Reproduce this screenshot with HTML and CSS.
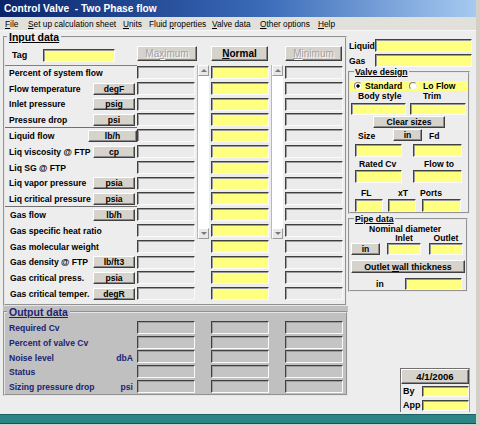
FILE: index.html
```html
<!DOCTYPE html>
<html>
<head>
<meta charset="utf-8">
<title>Control Valve - Two Phase flow</title>
<link rel="stylesheet" href="styles.css">
</head>
<body>
<div class="window">
  <div class="titlebar">Control Valve&nbsp; - Two Phase flow</div>
  <div class="menubar">
    <span class="mi m1"><u>F</u>ile</span>
    <span class="mi m2"><u>S</u>et up calculation sheet</span>
    <span class="mi m3"><u>U</u>nits</span>
    <span class="mi m4">Fluid <u>p</u>roperties</span>
    <span class="mi m5"><u>V</u>alve data</span>
    <span class="mi m6"><u>O</u>ther options</span>
    <span class="mi m7"><u>H</u>elp</span>
  </div>
  <div class="client">
    <div class="leftcol">
      <fieldset class="frame input">
        <legend>Input data</legend>
        <div class="grid">
          <div class="vscroll sb1"><div class="sbtn up"></div><div class="sbtn down"></div></div>
          <div class="vscroll sb2"><div class="sbtn up"></div><div class="sbtn down"></div></div>

          <div class="tagcell lab"><span class="taglbl">Tag</span><div class="box yel tagbox"></div></div>
          <div class="btn colbtn dis c1 wmax"><span>Ma<u>x</u>imum</span></div>
          <div class="btn colbtn strong c2"><span><u>N</u>ormal</span></div>
          <div class="btn colbtn dis c3"><span><u>M</u>inimum</span></div>

          <div class="lab first"><span>Percent of system flow</span></div>
          <div class="box gry c1"></div><div class="box yel c2"></div><div class="box gry c3"></div>

          <div class="lab"><span>Flow temperature</span><div class="btn ubtn">degF</div></div>
          <div class="box gry c1"></div><div class="box yel c2"></div><div class="box gry c3"></div>

          <div class="lab"><span>Inlet pressure</span><div class="btn ubtn">psig</div></div>
          <div class="box gry c1"></div><div class="box yel c2"></div><div class="box gry c3"></div>

          <div class="lab sep"><span>Pressure drop</span><div class="btn ubtn">psi</div></div>
          <div class="box gry c1"></div><div class="box yel c2"></div><div class="box gry c3"></div>

          <div class="lab"><span>Liquid flow</span><div class="btn ubtn wide">lb/h</div></div>
          <div class="box gry c1"></div><div class="box yel c2"></div><div class="box gry c3"></div>

          <div class="lab"><span>Liq viscosity @ FTP</span><div class="btn ubtn">cp</div></div>
          <div class="box gry c1"></div><div class="box yel c2"></div><div class="box gry c3"></div>

          <div class="lab"><span>Liq SG @ FTP</span></div>
          <div class="box gry c1"></div><div class="box yel c2"></div><div class="box gry c3"></div>

          <div class="lab"><span>Liq vapor pressure</span><div class="btn ubtn">psia</div></div>
          <div class="box gry c1"></div><div class="box yel c2"></div><div class="box gry c3"></div>

          <div class="lab sep"><span>Liq critical pressure</span><div class="btn ubtn">psia</div></div>
          <div class="box gry c1"></div><div class="box yel c2"></div><div class="box gry c3"></div>

          <div class="lab gas"><span>Gas flow</span><div class="btn ubtn">lb/h</div></div>
          <div class="box gry c1"></div><div class="box yel c2"></div><div class="box gry c3"></div>

          <div class="lab gas"><span>Gas specific heat ratio</span></div>
          <div class="box gry c1"></div><div class="box yel c2"></div><div class="box gry c3"></div>

          <div class="lab gas"><span>Gas molecular weight</span></div>
          <div class="box gry c1"></div><div class="box yel c2"></div><div class="box gry c3"></div>

          <div class="lab gas"><span>Gas density @ FTP</span><div class="btn ubtn">lb/ft3</div></div>
          <div class="box gry c1"></div><div class="box yel c2"></div><div class="box gry c3"></div>

          <div class="lab gas"><span>Gas critical press.</span><div class="btn ubtn">psia</div></div>
          <div class="box gry c1"></div><div class="box yel c2"></div><div class="box gry c3"></div>

          <div class="lab gas"><span>Gas critical temper.</span><div class="btn ubtn">degR</div></div>
          <div class="box gry c1"></div><div class="box yel c2"></div><div class="box gry c3"></div>
        </div>
      </fieldset>
      <div class="outwrap">
        <fieldset class="frame output">
          <legend>Output data</legend>
          <div class="ogrid">
            <div class="olab"><span>Required Cv</span></div>
            <div class="box obox c1"></div><div class="box obox c2"></div><div class="box obox c3"></div>
            <div class="olab"><span>Percent of valve Cv</span></div>
            <div class="box obox c1"></div><div class="box obox c2"></div><div class="box obox c3"></div>
            <div class="olab"><span>Noise level</span><span>dbA</span></div>
            <div class="box obox c1"></div><div class="box obox c2"></div><div class="box obox c3"></div>
            <div class="olab"><span>Status</span></div>
            <div class="box obox c1"></div><div class="box obox c2"></div><div class="box obox c3"></div>
            <div class="olab"><span>Sizing pressure drop</span><span>psi</span></div>
            <div class="box obox c1"></div><div class="box obox c2"></div><div class="box obox c3"></div>
          </div>
        </fieldset>
      </div>
    </div>

    <div class="rightcol">
      <div class="lgrow lq"><span class="lglbl">Liquid</span><div class="box yel lgbox"></div></div>
      <div class="lgrow gs"><span class="lglbl">Gas</span><div class="box yel lgbox"></div></div>

      <fieldset class="frame sm valve">
        <legend>Valve design</legend>
        <div class="radiorow">
          <span class="radio on"></span><span class="rtxt r1">Standard</span>
          <span class="radio r2"></span><span class="rtxt r3">Lo Flow</span>
        </div>
        <div class="vrow lbls1"><span class="l-body">Body style</span><span class="l-trim">Trim</span></div>
        <div class="vrow boxes1"><div class="box yel b-body"></div><div class="box yel b-trim"></div></div>
        <div class="btn clear"><span>Clear sizes</span></div>
        <div class="vrow sizerow"><span class="l-size">Size</span><div class="btn inbtn">in</div><span class="l-fd">Fd</span></div>
        <div class="vrow boxes2 bx2a"><div class="box yel b-size"></div><div class="box yel b-fd"></div></div>
        <div class="vrow lbls3"><span class="l-rcv">Rated Cv</span><span class="l-flow">Flow to</span></div>
        <div class="vrow boxes2 bx2b"><div class="box yel b-size"></div><div class="box yel b-fd"></div></div>
        <div class="vrow lbls4"><span class="l-fl">FL</span><span class="l-xt">xT</span><span class="l-ports">Ports</span></div>
        <div class="vrow boxes4"><div class="box yel b-fl"></div><div class="box yel b-xt"></div><div class="box yel b-ports"></div></div>
      </fieldset>

      <fieldset class="frame sm pipe">
        <legend>Pipe data</legend>
        <div class="nominal">Nominal diameter</div>
        <div class="vrow iolbls"><span class="l-inlet">Inlet</span><span class="l-outlet">Outlet</span></div>
        <div class="vrow piperow"><div class="btn pinbtn">in</div><div class="box yel b-inlet"></div><div class="box yel b-outlet"></div></div>
        <div class="btn wallbtn"><span>Outlet <u>w</u>all thickness</span></div>
        <div class="vrow wallrow"><span class="l-in">in</span><div class="box yel b-wall"></div></div>
      </fieldset>

      <div class="datebox">
        <div class="btn datebtn">4/1/2006</div>
        <div class="drow"><span class="dlbl">By</span><div class="box yel dbox"></div></div>
        <div class="drow"><span class="dlbl">App</span><div class="box yel dbox"></div></div>
      </div>
    </div>
  </div>
  <div class="statusbar"></div>
  <div class="bottomedge"></div>
</div>
</body>
</html>
```

FILE: styles.css
```css
* { box-sizing: border-box; }
html, body { margin: 0; padding: 0; }
body {
  width: 480px;
  height: 426px;
  overflow: hidden;
  background: #d4d0c8;
  font-family: "Liberation Sans", Arial, sans-serif;
  font-size: 8.6px;
  font-weight: bold;
  color: #000;
}
.window {
  width: 480px;
  height: 426px;
  display: flex;
  flex-direction: column;
  background: #ededed;
  border-right: 4px solid #d4d0c8;
}

/* title & menu */
.titlebar {
  height: 17px;
  flex: none;
  background: linear-gradient(90deg, #0a246a 0%, #3a6ab8 55%, #a6caf0 100%);
  color: #fff;
  font-size: 10.2px;
  line-height: 17px;
  padding-left: 4px;
  white-space: nowrap;
}
.menubar {
  height: 14px;
  flex: none;
  display: flex;
  align-items: center;
  background: #e2e0da;
  font-weight: normal;
  font-size: 8.3px;
  padding-left: 5px;
  white-space: nowrap;
  border-bottom: 1px solid #f8f8f8;
}
.mi { display: block; }
.m1 { width: 23px; }
.m2 { width: 95px; }
.m3 { width: 26px; }
.m4 { width: 63px; }
.m5 { width: 48px; }
.m6 { width: 58px; }

.client {
  flex: 1;
  display: flex;
  padding-left: 3px;
  min-height: 0;
}
.leftcol { width: 345px; display: flex; flex-direction: column; }
.rightcol { width: 128px; display: flex; flex-direction: column; }

/* frames */
fieldset.frame {
  margin: 0;
  padding: 0;
  min-width: 0;
  border: 2px groove #e6e6e6;
}
fieldset.frame legend {
  padding: 0 2px;
  margin-left: 2px;
  font-size: 10.5px;
  line-height: 12px;
  text-decoration: underline;
}
fieldset.sm legend {
  font-size: 8.7px;
  line-height: 10px;
  padding: 0 1px;
  margin-left: 4px;
}

/* generic controls */
.box {
  height: 13px;
  border-top: 1px solid #404040;
  border-left: 1px solid #404040;
  border-right: 1px solid #fafafa;
  border-bottom: 1px solid #fafafa;
  box-shadow: inset 1px 1px 0 #9c9c9c;
}
.yel { background: #ffff80; }
.gry { background: #ebebeb; }
.btn {
  background: #d6d3cc;
  border: 1px solid;
  border-color: #ffffff #404040 #404040 #ffffff;
  box-shadow: inset -1px -1px 0 #8a8a8a;
  display: flex;
  align-items: center;
  justify-content: center;
  white-space: nowrap;
}

/* input grid */
.input { width: 344px; height: 275px; margin-top: 1px; }
.grid {
  display: grid;
  grid-template-columns: 132px 58px 16px 58px 16px 58px;
  grid-template-rows: 20px repeat(15, 15.8px);
  padding-top: 2px;
}
.lab {
  grid-column: 1;
  display: flex;
  align-items: center;
  justify-content: space-between;
  padding-left: 4px;
  white-space: nowrap;
}
.lab.first { border-top: 1px solid #808080; }
.lab.sep { border-bottom: 1px solid #707070; }
.lab.gas { padding-left: 5px; }
.c1 { grid-column: 2; }
.c2 { grid-column: 4; }
.c3 { grid-column: 6; }
.grid > .box { align-self: start; margin-top: 1px; }

.tagcell { justify-content: flex-start; padding-left: 7px; }
.taglbl { font-size: 9px; width: 31px; }
.tagbox { width: 72px; }

.colbtn {
  height: 15px;
  align-self: start;
  margin-top: 1px;
  font-size: 10px;
  font-weight: normal;
}
.colbtn.wmax { width: 60px; }
.colbtn.strong { font-weight: bold; width: 57px; }
.colbtn.c3 { width: 57px; }
.dis { color: #a2a2a2; text-shadow: 1px 1px 0 #ffffff; }

.ubtn { width: 42px; height: 12px; margin-right: 2px; flex: none; }
.ubtn.wide { width: 49px; margin-right: 0; }

.vscroll {
  grid-row: 2 / span 11;
  justify-self: center;
  width: 12px;
  background: #ffffff;
  border-left: 1px solid #b8b8b8;
  display: flex;
  flex-direction: column;
  justify-content: space-between;
}
.sb1 { grid-column: 3; }
.sb2 { grid-column: 5; }
.sbtn {
  height: 11px;
  background: #e8e8e8;
  border: 1px solid;
  border-color: #ffffff #9a9a9a #9a9a9a #ffffff;
  display: flex;
  align-items: center;
  justify-content: center;
}
.sbtn.up::before, .sbtn.down::before {
  content: "";
  width: 0;
  height: 0;
  border-left: 3px solid transparent;
  border-right: 3px solid transparent;
}
.sbtn.up::before { border-bottom: 3px solid #777; }
.sbtn.down::before { border-top: 3px solid #777; }

/* output */
.outwrap { width: 345px; height: 90px; background: #c0c0c0; }
.output { height: 90px; width: 345px; color: #1c2470; }
.ogrid {
  display: grid;
  grid-template-columns: 132px 58px 16px 58px 16px 58px;
  grid-template-rows: repeat(5, 14.7px);
  padding-top: 3px;
}
.olab {
  grid-column: 1;
  display: flex;
  align-items: center;
  justify-content: space-between;
  padding-left: 4px;
  padding-right: 4px;
  white-space: nowrap;
}
.obox { background: #c4c4c4; height: 13px; align-self: start; }

/* right column */
.lgrow { display: flex; align-items: center; height: 13px; }
.lgrow.lq { margin-top: 8px; }
.lgrow.gs { margin-top: 2px; }
.lglbl { width: 27px; padding-left: 1px; }
.lgbox { width: 97px; }

.valve { margin: 4px 0 0 2px; width: 122px; padding-bottom: 5px; }
.radiorow {
  margin-top: 4px;
  height: 10px;
  background: #ffff80;
  display: flex;
  align-items: center;
}
.radio {
  width: 8px;
  height: 8px;
  flex: none;
  border-radius: 50%;
  background: #fff;
  border: 1px solid;
  border-color: #808080 #f0f0f0 #f0f0f0 #808080;
  margin-left: 4px;
}
.radio.on { background: radial-gradient(circle, #000 0 1.4px, #fff 1.9px); }
.rtxt.r1 { margin-left: 3px; width: 38px; }
.radio.r2 { margin-left: 6px; }
.rtxt.r3 { margin-left: 6px; }

.vrow { display: flex; white-space: nowrap; }
.vrow > span { display: block; flex: none; }
.lbls1 { height: 10px; line-height: 10px; }
.l-body { margin-left: 8px; width: 57px; }
.l-trim { margin-left: 8px; }
.boxes1 { margin-top: 2px; }
.boxes1 .box { height: 12px; }
.b-body { margin-left: 1px; width: 55px; }
.b-trim { margin-left: 4px; width: 56px; }
.clear { margin: 1px 0 0 23px; width: 72px; height: 12px; }
.sizerow { margin-top: 1px; height: 12px; align-items: flex-end; line-height: 10px; }
.l-size { margin-left: 8px; width: 27px; }
.inbtn { margin-left: 8px; width: 29px; height: 12px; }
.l-fd { margin-left: 7px; }
.boxes2 .box { height: 13px; }
.bx2a { margin-top: 3px; }
.bx2b { margin-top: 1px; }
.b-size { margin-left: 5px; width: 47px; }
.b-fd { margin-left: 11px; width: 49px; }
.lbls3 { margin-top: 2px; height: 10px; line-height: 10px; }
.l-rcv { margin-left: 9px; width: 56px; }
.l-flow { margin-left: 9px; }
.lbls4 { margin-top: 5px; height: 10px; line-height: 10px; }
.l-fl { margin-left: 11px; width: 30px; }
.l-xt { margin-left: 7px; width: 22px; }
.boxes4 { margin-top: 1px; }
.b-fl { margin-left: 5px; width: 28px; }
.b-xt { margin-left: 5px; width: 28px; }
.b-ports { margin-left: 6px; width: 39px; }

.pipe { margin: 7px 0 0 3px; width: 120px; padding-bottom: 5px; }
.pipe legend { margin-left: 3px; }
.nominal { height: 10px; line-height: 10px; padding-left: 19px; white-space: nowrap; }
.iolbls { height: 9px; line-height: 9px; }
.l-inlet { margin-left: 37px; width: 34px; text-align: center; }
.l-outlet { margin-left: 8px; width: 34px; text-align: center; }
.piperow .box { height: 12px; }
.pinbtn { margin-left: 1px; width: 29px; height: 12px; }
.b-inlet { margin-left: 7px; width: 34px; }
.b-outlet { margin-left: 8px; width: 34px; }
.wallbtn { margin: 5px 0 0 1px; width: 114px; height: 13px; font-size: 8.8px; }
.wallrow { margin-top: 5px; height: 12px; align-items: center; }
.l-in { margin-left: 26px; width: 29px; }
.b-wall { width: 57px; height: 12px; }

.datebox {
  margin: auto 0 2px 52px;
  width: 70px;
  height: 44px;
  border-left: 1px solid #707070;
  border-top: 1px solid #707070;
  border-right: 1px solid #a0a0a0;
}
.datebtn { height: 15px; font-size: 9.6px; }
.drow { display: flex; align-items: center; height: 14px; }
.dlbl { width: 21px; padding-left: 2px; font-size: 9px; }
.dbox { width: 47px; height: 11px; }

/* bottom */
.statusbar {
  height: 9px;
  flex: none;
  background: #2b8585;
  border-top: 1px solid #1d6262;
}
.bottomedge {
  height: 3px;
  flex: none;
  background: #d4d0c8;
  border-top: 1px solid #404040;
}
```
